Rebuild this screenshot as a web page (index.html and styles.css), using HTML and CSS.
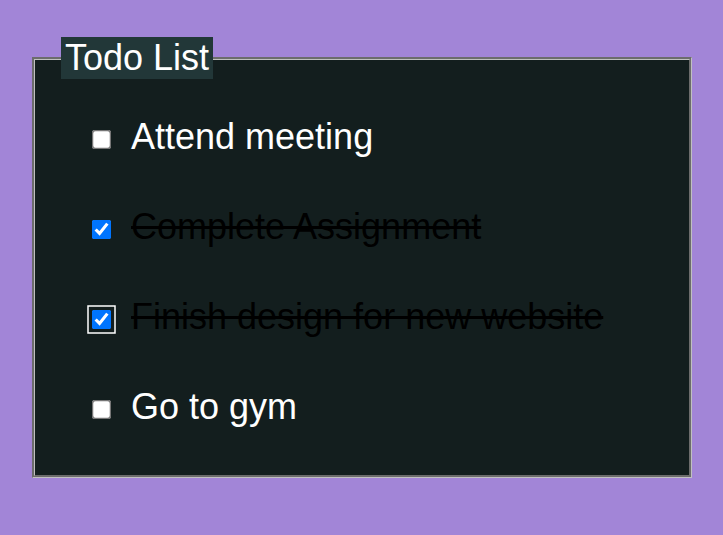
FILE: index.html
```html
<!DOCTYPE html>
<html lang="en">
<head>
<meta charset="utf-8">
<title>Todo List</title>
<link rel="stylesheet" href="styles.css">
</head>
<body>
<fieldset class="todo">
  <legend class="todo-title">Todo List</legend>
  <ul class="todo-list">
    <li class="todo-item"><input type="checkbox" class="todo-check"><span class="todo-text">Attend meeting</span></li>
    <li class="todo-item done"><input type="checkbox" class="todo-check" checked><span class="todo-text">Complete Assignment</span></li>
    <li class="todo-item done"><input type="checkbox" class="todo-check focused" checked><span class="todo-text">Finish design for new website</span></li>
    <li class="todo-item"><input type="checkbox" class="todo-check"><span class="todo-text">Go to gym</span></li>
  </ul>
</fieldset>
</body>
</html>
```

FILE: styles.css
```css
html, body {
  margin: 0;
  padding: 0;
}

body {
  background: #a285d7;
  font-family: "Liberation Sans", Arial, sans-serif;
  overflow: hidden;
}

.todo {
  box-sizing: border-box;
  width: 660px;
  margin: 37px 0 0 32px;
  padding: 12.6px 27px 23px 26px;
  font-size: 36px;
  background: #131e1e;
  border: 3px groove #c0c0c0;
}

.todo-title {
  padding: 0 4px;
  background: #223738;
  color: #ffffff;
  font-size: 36px;
  line-height: normal;
}

.todo-list {
  list-style: none;
  margin: 0;
  padding: 0 0 0 30px;
}

.todo-item {
  height: 90px;
  line-height: 90px;
  white-space: nowrap;
  color: #ffffff;
}

.todo-check {
  margin: 3px 3px 3px 4px;
  width: 13px;
  height: 13px;
  transform: scale(1.5);
  vertical-align: 3px;
}

.todo-check.focused {
  outline: 1.34px solid #ffffff;
  outline-offset: 2px;
  border-radius: 3px;
}

.todo-text {
  margin-left: 20px;
}

.todo-item.done .todo-text {
  color: #000000;
  text-decoration: line-through;
}
```
